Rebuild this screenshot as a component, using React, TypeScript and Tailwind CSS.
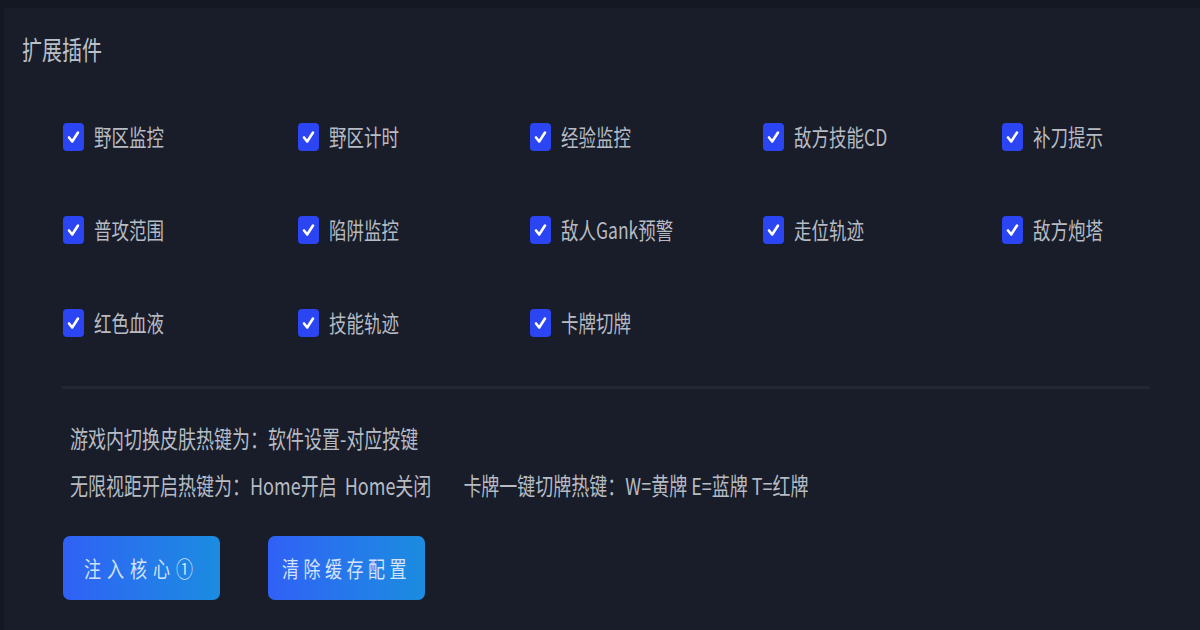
import React from "react";

const items = [
  "野区监控", "野区计时", "经验监控", "敌方技能CD", "补刀提示",
  "普攻范围", "陷阱监控", "敌人Gank预警", "走位轨迹", "敌方炮塔",
  "红色血液", "技能轨迹", "卡牌切牌",
];

const font = { fontFamily: '"Noto Sans CJK SC", "Noto Sans", sans-serif' };

function Check() {
  return (
    <span className="flex h-[28px] w-[21px] shrink-0 items-center justify-center rounded-[4px] bg-[#2b45f3]">
      <svg width="13" height="18" viewBox="0 0 13 18" fill="none">
        <path d="M2 9.5 L5.2 13.5 L11 4.5" stroke="#ffffff" strokeWidth="2.6" strokeLinecap="round" strokeLinejoin="round" />
      </svg>
    </span>
  );
}

export default function App() {
  return (
    <div
      className="h-[630px] w-[1200px] overflow-hidden border-l-[4px] border-t-[8px] border-[#131823] bg-[#181d29] text-[#b7bbc4]"
      style={font}
    >
      <div className="pl-[18px] pt-[29px]">
        <span className="inline-block scale-y-[1.3] text-[20px] leading-[26px] text-[#bcc0c8]">扩展插件</span>
      </div>

      <div className="ml-[59px] mt-[27px] grid grid-cols-[235px_232px_233px_239px_1fr]">
        {items.map((t) => (
          <div key={t} className="flex h-[93px] items-center gap-[10px]">
            <Check />
            <span className="inline-block scale-y-[1.3] text-[17.5px] leading-[26px]">{t}</span>
          </div>
        ))}
      </div>

      <div className="ml-[58px] mr-[50px] mt-[17px] h-[3px] bg-[#212734]" />

      <div className="ml-[66px] mt-[36px] flex flex-col gap-[21px] text-[18px] leading-[26px]">
        <div>
          <span className="inline-block scale-y-[1.3]">游戏内切换皮肤热键为：软件设置-对应按键</span>
        </div>
        <div className="flex">
          <span className="inline-block scale-y-[1.3] whitespace-pre">无限视距开启热键为：Home开启  Home关闭</span>
          <span className="ml-[32px] inline-block scale-y-[1.3] whitespace-pre">卡牌一键切牌热键：W=黄牌 E=蓝牌 T=红牌</span>
        </div>
      </div>

      <div className="ml-[59px] mt-[38px] flex gap-[48px]">
        <button className="flex h-[64px] w-[157px] items-center justify-center rounded-[7px] bg-gradient-to-r from-[#3060f5] to-[#1b8ce0] text-[17px] text-[#d4e2fb]">
          <span className="inline-block scale-y-[1.3] tracking-[6px]">注入核心①</span>
        </button>
        <button className="flex h-[64px] w-[157px] items-center justify-center rounded-[7px] bg-gradient-to-r from-[#3060f5] to-[#1b8ce0] text-[17px] text-[#d4e2fb]">
          <span className="inline-block scale-y-[1.3] tracking-[4.5px]">清除缓存配置</span>
        </button>
      </div>
    </div>
  );
}
